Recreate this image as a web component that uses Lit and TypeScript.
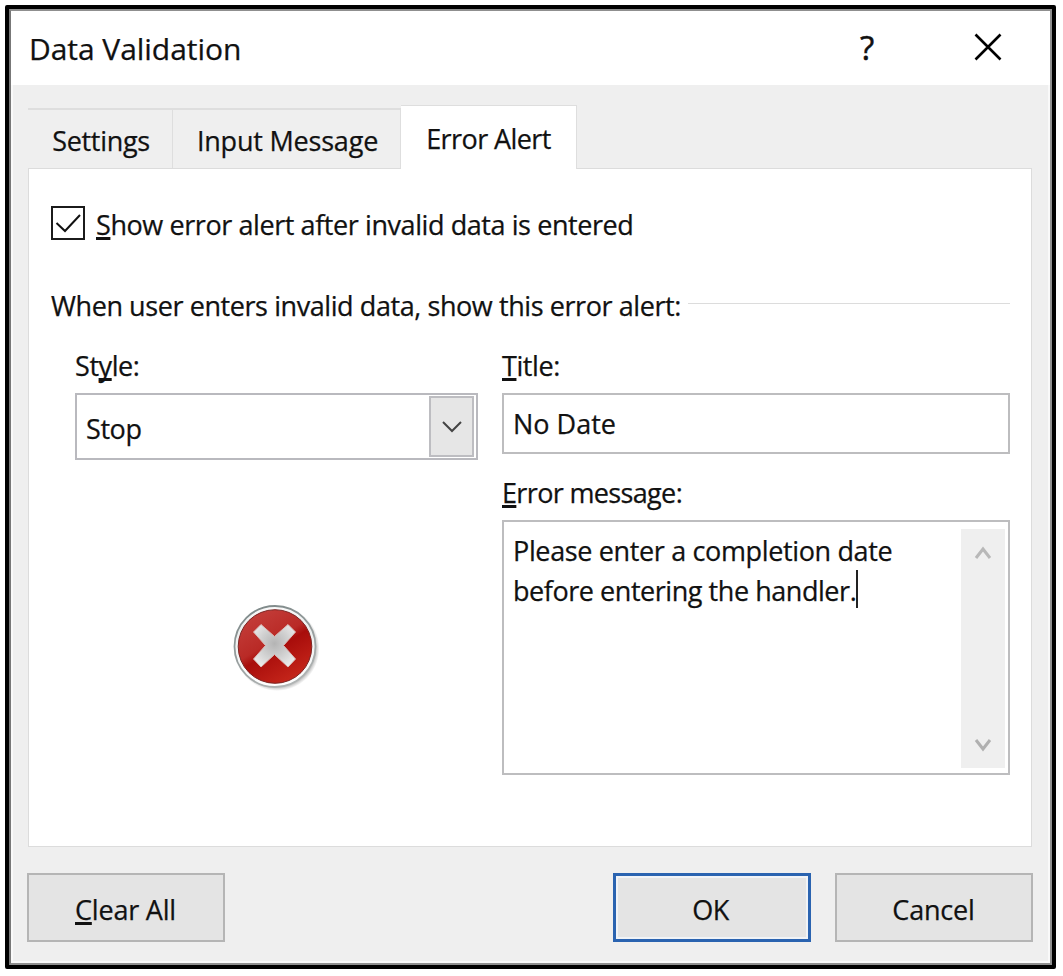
import { LitElement, html, css } from "lit";
import { customElement, state } from "lit/decorators.js";

@customElement("stop-icon")
class StopIcon extends LitElement {
  static styles = css`
    :host { display: block; width: 88px; height: 88px; }
    svg { display: block; }
  `;
  render() {
    return html`<svg width="88" height="88" viewBox="0 0 88 88">
      <defs>
        <radialGradient id="sh"><stop offset=".86" stop-color="#555" stop-opacity=".6" /><stop offset="1" stop-color="#777" stop-opacity="0" /></radialGradient>
        <linearGradient id="edge" x1=".2" y1="0" x2=".6" y2="1"><stop offset="0" stop-color="#7d8888" /><stop offset="1" stop-color="#b0b4b4" /></linearGradient>
        <linearGradient id="ring" x1="0" y1="0" x2="0" y2="1"><stop offset="0" stop-color="#fafafa" /><stop offset=".3" stop-color="#eceeee" /><stop offset="1" stop-color="#fff" /></linearGradient>
        <linearGradient id="red" x1=".15" y1="0" x2=".75" y2="1"><stop offset="0" stop-color="#c5403c" /><stop offset=".45" stop-color="#b92a26" /><stop offset=".55" stop-color="#a80d0b" /><stop offset="1" stop-color="#c8281c" /></linearGradient>
        <radialGradient id="x" cx=".5" cy=".45" r=".66"><stop offset="0" stop-color="#b4b4b4" /><stop offset=".5" stop-color="#d0d0d0" /><stop offset="1" stop-color="#f0f0f0" /></radialGradient>
      </defs>
      <circle cx="45" cy="45.500" r="42.500" fill="url(#sh)" />
      <circle cx="43" cy="43.500" r="40.500" fill="url(#ring)" stroke="url(#edge)" stroke-width="1.800" />
      <circle cx="43" cy="43.500" r="36.800" fill="url(#red)" stroke="#7c2422" stroke-width="1" />
      <path d="M29 21.500 L42.500 33.500 L56 21.500 L63.500 29 L51.500 42.500 L63.500 56 L56 64 L42.500 51.500 L29 64 L21.500 56 L33.500 42.500 L21.500 29 Z" fill="url(#x)" stroke="#d9b9b5" stroke-width="1" stroke-linejoin="round" />
    </svg>`;
  }
}

@customElement("app-root")
class AppRoot extends LitElement {
  @state() private active = 2;

  static styles = css`
    :host { display: block; width: 1063px; height: 976px; box-sizing: border-box; padding: 5px 7px 7px 5px; background: #fff; font-family: "Open Sans", "Noto Sans", sans-serif; font-size: 27px; letter-spacing: -0.42px; line-height: 36px; color: #111; -webkit-text-stroke: 0.25px #111; }
    * { box-sizing: border-box; }
    u { text-decoration-thickness: 3px; text-underline-offset: 2px; text-decoration-skip-ink: none; }
    .frame { height: 964px; border: 4px solid #000; border-radius: 2px; }
    .dialog { height: 956px; border: 2px solid #8f8f8f; border-left-color: #777; background: #efefef; box-shadow: inset 0 0 0 2px #f9f9f9; display: flex; flex-direction: column; }
    .header { height: 74px; background: #fff; display: flex; align-items: center; padding: 0 48px 0 18px; }
    .name { flex: 1; font-size: 30px; letter-spacing: -0.05px; padding-top: 2px; }
    .help { font-size: 33px; width: 20px; margin-right: 94px; padding-bottom: 1px; -webkit-text-stroke: 0.5px #111; }
    .close { display: block; margin-bottom: 2px; }
    .tabs { display: flex; align-items: flex-end; margin: 20px 17px 0 17px; height: 63px; position: relative; z-index: 1; }
    .tab { height: 60px; border: 1px solid #dedede; border-width: 2px 1px 0 0; text-align: center; display: flex; align-items: center; justify-content: center; padding-top: 3px; }
    .tab.settings { width: 145px; letter-spacing: -0.3px; padding-left: 2px; }
    .tab.input { width: 228px; letter-spacing: -0.2px; padding-left: 2px; }
    .tab.error { width: 176px; height: 64px; margin-bottom: -1px; background: #fff; border-width: 1px 1px 0 0; letter-spacing: -0.58px; }
    .panel { height: 679px; margin: 0 18px 0 17px; background: #fff; border: 1px solid #dcdcdc; padding: 36px 21px 0 22px; }
    .check { display: flex; align-items: center; gap: 11px; height: 38px; }
    .check .caption { padding-top: 2px; }
    .box { width: 34px; height: 34px; border: 2px solid #1b1b1b; margin-bottom: 2px; }
    .box svg { display: block; }
    .group { display: flex; align-items: center; gap: 7px; margin-top: 45px; height: 36px; }
    .rule { flex: 1; height: 1px; background: #dcdcdc; margin-bottom: 5px; }
    .cols { display: grid; grid-template-columns: 403px 508px; column-gap: 24px; padding-left: 24px; margin-top: 24px; }
    .label { height: 36px; margin-bottom: 9px; }
    .select { height: 67px; border: 2px solid #b9b9be; display: flex; align-items: stretch; padding: 1px 2px 0 9px; }
    .value { flex: 1; align-self: center; padding-top: 3px; }
    .drop { width: 45px; height: 61px; border: 2px solid #bdbdc1; background: #e6e6e6; display: flex; align-items: center; justify-content: center; padding-top: 1px; }
    .stop { margin: 143px 0 0 157px; }
    .field { height: 61px; border: 2px solid #bdbdbf; padding: 11px 9px 7px; letter-spacing: 0; }
    .label.second { margin-top: 21px; letter-spacing: -0.65px; }
    .area { height: 255px; border: 2px solid #bdbdbf; padding: 7px 3px 5px 9px; display: flex; justify-content: space-between; }
    .text { padding-top: 2px; white-space: nowrap; letter-spacing: -0.36px; }
    .line { display: flex; align-items: center; height: 40px; }
    .line.last { letter-spacing: -0.45px; }
    .caret { width: 2px; height: 38px; background: #222; margin-bottom: 4px; }
    .scroll { width: 44px; height: 239px; background: #efefef; display: flex; flex-direction: column; justify-content: space-between; align-items: center; padding: 17px 0 16px; }
    .footer { display: flex; margin: 26px 17px 0 16px; }
    .button { width: 198px; height: 69px; border: 2px solid #b5b5b5; background: #e4e4e4; display: flex; align-items: center; justify-content: center; padding-top: 4px; }
    .button.clear { letter-spacing: -0.2px; padding-right: 1px; }
    .button.ok { margin-left: auto; margin-right: 24px; border: 3px solid #2a63b0; box-shadow: inset 0 0 0 2px #f0f3f7; padding-right: 3px; }
    .button.cancel { letter-spacing: -0.2px; padding-right: 1px; }
  `;

  render() {
    const chevron = (d: string, w: number, h: number, c: string, s: number) =>
      html`<svg width=${w} height=${h} viewBox="0 0 ${w} ${h}"><path d=${d} fill="none" stroke=${c} stroke-width=${s} /></svg>`;
    const tabs = [["settings", "Settings"], ["input", "Input Message"], ["error", "Error Alert"]];
    return html`<div class="frame"><div class="dialog">
      <div class="header">
        <span class="name">Data Validation</span>
        <span class="help">?</span>
        <svg class="close" width="28" height="28" viewBox="0 0 28 28"><path d="M1.500 1.500 L26.500 26.500 M26.500 1.500 L1.500 26.500" stroke="#000" stroke-width="2.600" /></svg>
      </div>
      <div class="tabs">${tabs.map(([k, n], i) => html`<div class="tab ${k}" @click=${() => (this.active = i)}><span>${n}</span></div>`)}</div>
      <div class="panel">
        <div class="check">
          <span class="box"><svg width="30" height="30" viewBox="0 0 30 30"><path d="M3.500 15 L12 23 L27 7" fill="none" stroke="#111" stroke-width="2" /></svg></span>
          <span class="caption"><u>S</u>how error alert after invalid data is entered</span>
        </div>
        <div class="group"><span>When user enters invalid data, show this error alert:</span><span class="rule"></span></div>
        <div class="cols">
          <div>
            <div class="label"><span>St<u>y</u>le:</span></div>
            <div class="select"><span class="value">Stop</span><span class="drop">${chevron("M2 2 L11 11 L20 2", 22, 14, "#444", 2)}</span></div>
            <stop-icon class="stop"></stop-icon>
          </div>
          <div>
            <div class="label"><span><u>T</u>itle:</span></div>
            <div class="field"><span>No Date</span></div>
            <div class="label second"><span><u>E</u>rror message:</span></div>
            <div class="area">
              <div class="text">
                <div class="line"><span>Please enter a completion date</span></div>
                <div class="line last"><span>before entering the handler.</span><span class="caret"></span></div>
              </div>
              <div class="scroll">${chevron("M2 12 L9 3 L16 12", 18, 14, "#b8b8b8", 3)}${chevron("M2 2 L9 11 L16 2", 18, 14, "#b0b0b0", 3)}</div>
            </div>
          </div>
        </div>
      </div>
      <div class="footer">
        <div class="button clear"><span><u>C</u>lear All</span></div>
        <div class="button ok"><span>OK</span></div>
        <div class="button cancel"><span>Cancel</span></div>
      </div>
    </div></div>`;
  }
}
